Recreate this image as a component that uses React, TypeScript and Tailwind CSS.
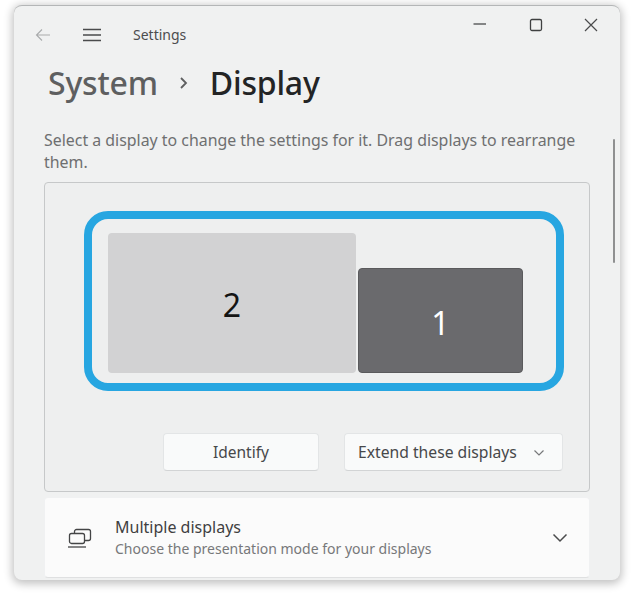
import React from 'react';

const font = { fontFamily: '"Noto Sans", "Open Sans", sans-serif' };

const App: React.FC = () => {
  return (
    <div className="w-[633px] h-[593px] bg-white overflow-hidden" style={font}>
      <div className="pl-[14px] pt-[5px]">
        {/* Settings window */}
        <div className="relative w-[606px] h-[575px] bg-[#f0f1f1] rounded-lg border-t border-t-[#b4b6b7] shadow-[0_2px_8px_2px_rgba(0,0,0,0.24)]">
          {/* Title bar */}
          <div className="flex items-center h-[28px] mt-[15px] pl-[21px] pr-[22px] absolute top-0 left-0 right-0">
            <svg width="16" height="14" viewBox="0 0 16 14" fill="none" stroke="#a9abac" strokeWidth="1.1">
              <path d="M15 7H1.5M7 1.5 1.5 7 7 12.5" />
            </svg>
            <svg className="ml-[31px]" width="20" height="14" viewBox="0 0 20 14" fill="none" stroke="#4a4b4c" strokeWidth="1.3">
              <path d="M1 1.5h18M1 7h18M1 12.5h18" />
            </svg>
            <span className="ml-[31px] text-[14px] text-[#4c4d4e] -translate-y-[1px]">Settings</span>
            <div className="ml-auto flex items-center mb-[20px]">
              <svg width="14" height="14" viewBox="0 0 14 14" fill="none" stroke="#4a4b4c" strokeWidth="1.3">
                <path d="M0.5 6h12.5" />
              </svg>
              <svg className="ml-[42px]" width="14" height="14" viewBox="0 0 14 14" fill="none" stroke="#3f4041" strokeWidth="1.3">
                <rect x="1.5" y="1.5" width="11" height="11" rx="1.5" />
              </svg>
              <svg className="ml-[41px]" width="14" height="14" viewBox="0 0 14 14" fill="none" stroke="#4a4b4c" strokeWidth="1.2">
                <path d="M1 1l12 12M13 1 1 13" />
              </svg>
            </div>
          </div>

          <div className="pl-[30px] pr-[30px] pt-[52px]">
            {/* Breadcrumb */}
            <div className="flex items-center h-[50px] pl-[4px]">
              <span className="text-[32px] font-medium text-[#5e5f60] tracking-[-0.2px]">System</span>
              <svg className="ml-[21px]" width="10" height="14" viewBox="0 0 10 14" fill="none" stroke="#5e5f60" strokeWidth="1.8">
                <path d="M2 2l5 5-5 5" />
              </svg>
              <span className="ml-[21px] text-[32px] font-medium text-[#232425] tracking-[-0.2px]">Display</span>
            </div>

            <p className="mt-[21px] text-[15.9px] leading-[22px] text-[#6e6f70]">
              Select a display to change the settings for it. Drag displays to rearrange them.
            </p>

            {/* Display arrangement panel */}
            <div className="mt-[9px] h-[310px] rounded-[4px] border border-[#c6c8c9] bg-[#eeefef] pl-[39px] pt-[28px]">
              <div className="w-[480px] h-[180px] rounded-[24px] border-[8px] border-[#27a6e1] pl-[16px] pt-[14px] flex">
                <div className="w-[248px] h-[140px] rounded-[4px] bg-[#d2d2d3] flex items-center justify-center pt-[4px] text-[32px] text-[#141414]">
                  2
                </div>
                <div className="ml-[2px] mt-[35px] w-[165px] h-[105px] rounded-[4px] bg-[#6a6a6d] border border-[#5a5a5c] flex items-center justify-center pt-[4px] text-[32px] text-white">
                  1
                </div>
              </div>

              <div className="mt-[42px] ml-[79px] flex gap-[25px]">
                <button className="w-[156px] h-[38px] rounded-[4px] bg-[#f9fafa] border border-[#e3e5e6] border-b-[#d2d4d5] pt-[1px] text-[15.5px] text-[#47484a]">
                  Identify
                </button>
                <button className="w-[219px] h-[38px] rounded-[4px] bg-[#f9fafa] border border-[#e3e5e6] border-b-[#d2d4d5] flex items-center pl-[13px] pt-[1px] text-[15.7px] text-[#47484a]">
                  Extend these displays
                  <svg className="ml-[16px]" width="12" height="8" viewBox="0 0 12 8" fill="none" stroke="#77787a" strokeWidth="1.2">
                    <path d="M1.5 1.5 6 6l4.5-4.5" />
                  </svg>
                </button>
              </div>
            </div>

            {/* Multiple displays row */}
            <div className="mt-[5px] h-[81px] rounded-[4px] bg-[#fbfbfb] border border-[#f0f1f2] border-b-[#dfe0e1] flex items-center pl-[22px] pr-[21px]">
              <svg width="26" height="22" viewBox="0 0 26 22" fill="none" stroke="#444546" strokeWidth="1.3">
                <rect x="7.5" y="2.5" width="16" height="11" rx="2" />
                <rect x="2.5" y="6.5" width="15" height="10" rx="2" fill="#fbfbfb" />
                <path d="M1 20h18" />
              </svg>
              <div className="ml-[22px]">
                <div className="text-[16px] leading-[22px] text-[#3f4041]">Multiple displays</div>
                <div className="text-[14px] leading-[21px] text-[#77787a]">Choose the presentation mode for your displays</div>
              </div>
              <svg className="ml-auto" width="16" height="10" viewBox="0 0 16 10" fill="none" stroke="#4a4b4c" strokeWidth="1.5">
                <path d="M1.5 1.5 8 8l6.5-6.5" />
              </svg>
            </div>
          </div>

          {/* Scrollbar thumb */}
          <div className="absolute left-[599px] top-[133px] w-[2px] h-[124px] rounded-full bg-[#8f9091]" />
        </div>
      </div>
    </div>
  );
};

export default App;
